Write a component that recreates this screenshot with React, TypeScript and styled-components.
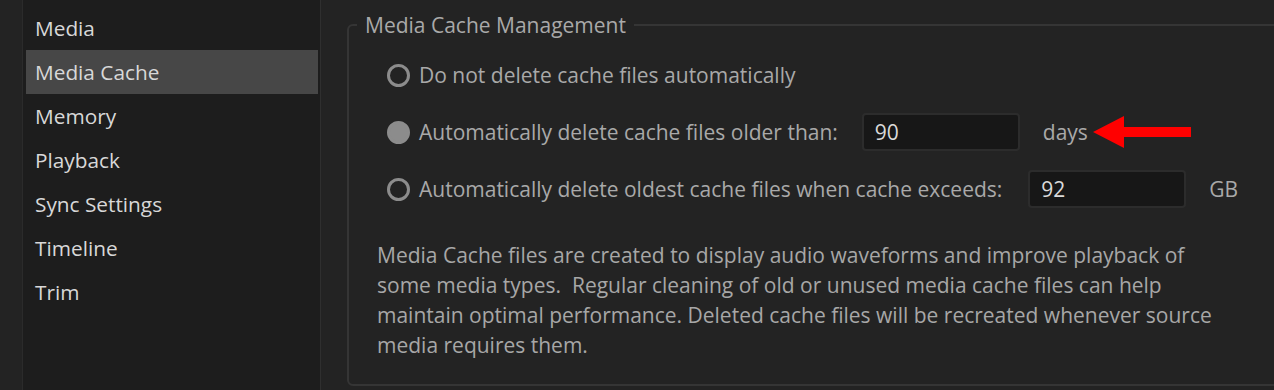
import styled, { createGlobalStyle } from "styled-components";

const GlobalStyle = createGlobalStyle`
  html, body {
    margin: 0;
    padding: 0;
    background: #232323;
  }
  body {
    font-family: "Open Sans", "Noto Sans", sans-serif;
    -webkit-font-smoothing: antialiased;
  }
`;

const Page = styled.div`
  display: flex;
  width: 1274px;
  height: 390px;
  overflow: hidden;
  background: #232323;
`;

const Gutter = styled.div`
  width: 22px;
  flex-shrink: 0;
  background: #232323;
  border-right: 1px solid #2b2b2b;
`;

const Sidebar = styled.ul`
  list-style: none;
  margin: 0;
  padding: 6px 0 0;
  width: 297px;
  flex-shrink: 0;
  background: #1d1d1d;
  border-right: 1px solid #2f2f2f;
`;

const NavItem = styled.li<{ $active?: boolean }>`
  height: 44px;
  display: flex;
  align-items: center;
  margin: 0 2px 0 3px;
  padding-left: 9px;
  font-size: 20.8px;
  color: #d8d8d8;
  background: ${({ $active }) => ($active ? "#474747" : "transparent")};
`;

const Main = styled.div`
  flex: 1;
  padding: 12px 0 0 26px;
`;

const Group = styled.fieldset`
  margin: 0 -30px 0 0;
  padding: 0 0 0 38px;
  height: 374px;
  border: 2px solid #353535;
  border-radius: 6px;
  box-sizing: border-box;
`;

const Legend = styled.legend`
  margin-left: -30px;
  padding: 0 8px;
  font-size: 21px;
  line-height: 26px;
  color: #a9a9a9;
`;

const Options = styled.div`
  display: flex;
  flex-direction: column;
  gap: 19px;
  margin-top: 18px;
`;

const OptionRow = styled.div`
  display: flex;
  align-items: center;
  height: 38px;
`;

const Radio = styled.span<{ $checked?: boolean }>`
  width: 23px;
  height: 23px;
  border-radius: 50%;
  box-sizing: border-box;
  border: 3px solid #8c8c8c;
  background: ${({ $checked }) => ($checked ? "#8c8c8c" : "transparent")};
  margin-right: 9px;
  flex-shrink: 0;
`;

const OptionLabel = styled.span`
  font-size: 21px;
  color: #a9a9a9;
  white-space: nowrap;
`;

const NumberBox = styled.div<{ $gap: number }>`
  width: 158px;
  height: 38px;
  margin-left: ${({ $gap }) => $gap}px;
  box-sizing: border-box;
  flex-shrink: 0;
  background: #171717;
  border: 2px solid #2c2c2c;
  border-radius: 4px;
  display: flex;
  align-items: center;
  padding-left: 11px;
  font-size: 21px;
  color: #dadada;
`;

const Unit = styled.span`
  margin-left: 23px;
  font-size: 21px;
  color: #a9a9a9;
`;

const Arrow = styled.svg`
  margin-left: 5px;
  flex-shrink: 0;
`;

const Description = styled.p`
  margin: 32px 0 0 -10px;
  font-size: 21px;
  line-height: 30px;
  color: #a7a7a7;
  white-space: nowrap;
`;

const navItems = [
  "Media",
  "Media Cache",
  "Memory",
  "Playback",
  "Sync Settings",
  "Timeline",
  "Trim",
];

export default function App() {
  return (
    <>
      <GlobalStyle />
      <Page>
        <Gutter />
        <Sidebar>
          {navItems.map((item) => (
            <NavItem key={item} $active={item === "Media Cache"}>
              {item}
            </NavItem>
          ))}
        </Sidebar>
        <Main>
          <Group>
            <Legend>Media Cache Management</Legend>
            <Options>
              <OptionRow>
                <Radio />
                <OptionLabel>Do not delete cache files automatically</OptionLabel>
              </OptionRow>
              <OptionRow>
                <Radio $checked />
                <OptionLabel>Automatically delete cache files older than:</OptionLabel>
                <NumberBox $gap={24}>90</NumberBox>
                <Unit>days</Unit>
                <Arrow width="100" height="32" viewBox="0 0 100 32">
                  <polygon points="0,16 31,0 31,11 98,11 98,21 31,21 31,32" fill="#ff0000" />
                </Arrow>
              </OptionRow>
              <OptionRow>
                <Radio />
                <OptionLabel>
                  Automatically delete oldest cache files when cache exceeds:
                </OptionLabel>
                <NumberBox $gap={26}>92</NumberBox>
                <Unit>GB</Unit>
              </OptionRow>
            </Options>
            <Description>
              Media Cache files are created to display audio waveforms and improve playback of
              <br />
              some media types.&nbsp; Regular cleaning of old or unused media cache files can help
              <br />
              maintain optimal performance. Deleted cache files will be recreated whenever source
              <br />
              media requires them.
            </Description>
          </Group>
        </Main>
      </Page>
    </>
  );
}
